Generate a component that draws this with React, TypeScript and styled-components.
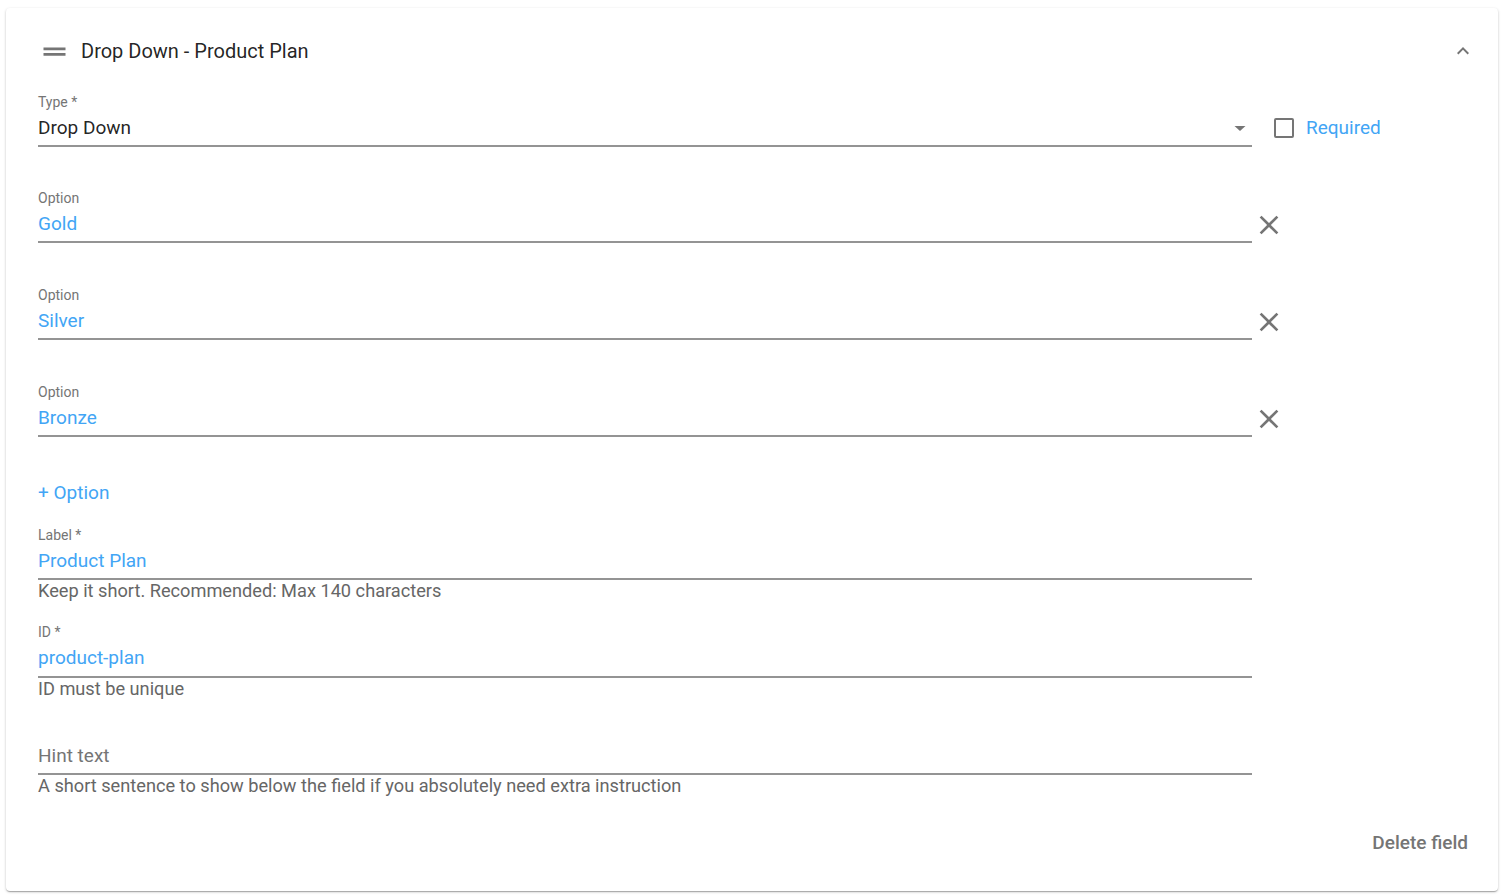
import React from "react";
import styled, { createGlobalStyle } from "styled-components";

const Global = createGlobalStyle`
  html, body { margin: 0; padding: 0; background: #ffffff; }
  body { font-family: Roboto, "Noto Sans", Arial, sans-serif; -webkit-font-smoothing: antialiased; }
  * { box-sizing: border-box; }
`;

const BLUE = "#42a5f5";
const GREY = "#757575";

const Page = styled.div`
  padding: 8px 6px 5px 6px;
`;

const Card = styled.section`
  background: #fff;
  border-radius: 4px;
  box-shadow: 0 1px 3px rgba(0, 0, 0, 0.2), 0 1px 1px rgba(0, 0, 0, 0.14),
    0 2px 1px -1px rgba(0, 0, 0, 0.12);
  padding: 19px 23px 36px 32px;
  display: flex;
  flex-direction: column;
  height: 883px;
`;

const Header = styled.div`
  display: flex;
  align-items: center;
  height: 48px;
`;

const Title = styled.h2`
  margin: 0 0 0 10px;
  font-size: 20px;
  font-weight: 400;
  color: rgba(0, 0, 0, 0.87);
  flex: 1;
`;

const IconButton = styled.button`
  border: 0;
  background: transparent;
  padding: 0;
  width: 24px;
  height: 24px;
  display: flex;
  align-items: center;
  justify-content: center;
  cursor: pointer;
  color: ${GREY};
`;

const Row = styled.div<{ $mt: number }>`
  display: flex;
  align-items: flex-start;
  margin-top: ${(p) => p.$mt}px;
`;

const Field = styled.div`
  width: 1214px;
  flex: 0 0 1214px;
  display: flex;
  flex-direction: column;
`;

const Label = styled.label`
  font-size: 14px;
  line-height: 16px;
  height: 16px;
  color: ${GREY};
  margin-bottom: 6px;
`;

const InputWrap = styled.div<{ $pb?: number }>`
  position: relative;
  border-bottom: 2px solid #949494;
  padding-bottom: ${(p) => p.$pb ?? 5}px;
`;

const Value = styled.div<{ $tone: "blue" | "dark" | "placeholder" }>`
  font-size: 19px;
  line-height: 24px;
  height: 24px;
  color: ${(p) =>
    p.$tone === "blue" ? BLUE : p.$tone === "dark" ? "rgba(0,0,0,0.87)" : GREY};
`;

const DropArrow = styled.span`
  position: absolute;
  right: 0;
  top: 0;
  width: 24px;
  height: 24px;
  display: flex;
  color: ${GREY};
`;

const Helper = styled.div`
  font-size: 18.2px;
  line-height: 22px;
  color: #666666;
`;

const Side = styled.div`
  display: flex;
  align-items: center;
`;

const CheckWrap = styled.label`
  display: flex;
  align-items: center;
  margin: 22px 0 0 22px;
  cursor: pointer;
`;

const CheckBox = styled.span`
  width: 20px;
  height: 20px;
  border: 2px solid ${GREY};
  border-radius: 2px;
  display: inline-block;
`;

const CheckText = styled.span`
  font-size: 19px;
  line-height: 24px;
  color: ${BLUE};
  margin-left: 12px;
`;

const RemoveBtn = styled(IconButton)`
  width: 32px;
  height: 32px;
  margin: 19px 0 0 1px;
`;

const AddOption = styled.button`
  border: 0;
  background: transparent;
  padding: 0;
  align-self: flex-start;
  font-family: inherit;
  font-size: 19px;
  line-height: 24px;
  color: ${BLUE};
  margin-top: 44px;
  cursor: pointer;
`;

const Footer = styled.div`
  margin-top: auto;
  display: flex;
  justify-content: flex-end;
  padding-right: 7px;
`;

const DeleteBtn = styled.button`
  border: 0;
  background: transparent;
  padding: 0;
  font-family: inherit;
  font-size: 19px;
  font-weight: 500;
  line-height: 24px;
  color: ${GREY};
  cursor: pointer;
`;

const DragIcon = () => (
  <svg width="33" height="33" viewBox="0 0 24 24" fill={GREY}>
    <path d="M20 9H4v2h16V9zM4 15h16v-2H4v2z" />
  </svg>
);

const ExpandLess = () => (
  <svg width="24" height="24" viewBox="0 0 24 24" fill={GREY}>
    <path d="M12 8l-6 6 1.41 1.41L12 10.83l4.59 4.58L18 14z" />
  </svg>
);

const ArrowDrop = () => (
  <svg width="24" height="24" viewBox="0 0 24 24" fill="currentColor">
    <path d="M6.5 10l5.5 5 5.5-5z" />
  </svg>
);

const CloseIcon = () => (
  <svg width="32" height="32" viewBox="0 0 24 24" fill={GREY}>
    <path d="M19 6.41L17.59 5 12 10.59 6.41 5 5 6.41 10.59 12 5 17.59 6.41 19 12 13.41 17.59 19 19 17.59 13.41 12z" />
  </svg>
);

const options = ["Gold", "Silver", "Bronze"];

export default function App() {
  return (
    <Page>
      <Global />
      <Card>
        <Header>
          <DragIcon />
          <Title>Drop Down - Product Plan</Title>
          <IconButton aria-label="collapse">
            <ExpandLess />
          </IconButton>
        </Header>

        <Row $mt={19}>
          <Field>
            <Label>Type *</Label>
            <InputWrap>
              <Value $tone="dark">Drop Down</Value>
              <DropArrow>
                <ArrowDrop />
              </DropArrow>
            </InputWrap>
          </Field>
          <CheckWrap>
            <CheckBox />
            <CheckText>Required</CheckText>
          </CheckWrap>
        </Row>

        {options.map((o, i) => (
          <Row $mt={i === 0 ? 43 : 44} key={o}>
            <Field>
              <Label>Option</Label>
              <InputWrap>
                <Value $tone="blue">{o}</Value>
              </InputWrap>
            </Field>
            <Side>
              <RemoveBtn aria-label="remove">
                <CloseIcon />
              </RemoveBtn>
            </Side>
          </Row>
        ))}

        <AddOption>+ Option</AddOption>

        <Row $mt={22}>
          <Field>
            <Label>Label *</Label>
            <InputWrap>
              <Value $tone="blue">Product Plan</Value>
            </InputWrap>
            <Helper>Keep it short. Recommended: Max 140 characters</Helper>
          </Field>
        </Row>

        <Row $mt={22}>
          <Field>
            <Label>ID *</Label>
            <InputWrap $pb={6}>
              <Value $tone="blue">product-plan</Value>
            </InputWrap>
            <Helper>ID must be unique</Helper>
          </Field>
        </Row>

        <Row $mt={22}>
          <Field>
            <Label />
            <InputWrap>
              <Value $tone="placeholder">Hint text</Value>
            </InputWrap>
            <Helper>
              A short sentence to show below the field if you absolutely need extra instruction
            </Helper>
          </Field>
        </Row>

        <Footer>
          <DeleteBtn>Delete field</DeleteBtn>
        </Footer>
      </Card>
    </Page>
  );
}
